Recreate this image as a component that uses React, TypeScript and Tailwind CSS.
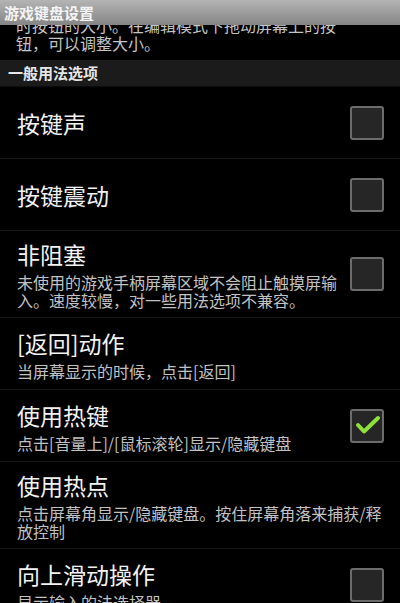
import type { ReactNode } from 'react'

interface Pref {
  title: string
  summary?: string
  checkbox?: boolean
  checked?: boolean
}

const PREFS: Pref[] = [
  { title: '按键声', checkbox: true },
  { title: '按键震动', checkbox: true },
  { title: '非阻塞', summary: '未使用的游戏手柄屏幕区域不会阻止触摸屏输入。速度较慢，对一些用法选项不兼容。', checkbox: true },
  { title: '[返回]动作', summary: '当屏幕显示的时候，点击[返回]' },
  { title: '使用热键', summary: '点击[音量上]/[鼠标滚轮]显示/隐藏键盘', checkbox: true, checked: true },
  { title: '使用热点', summary: '点击屏幕角显示/隐藏键盘。按住屏幕角落来捕获/释放控制' },
  { title: '向上滑动操作', summary: '显示输入的法选择器', checkbox: true },
]

export default function App() {
  return (
    <div
      className="h-[603px] w-[400px] overflow-hidden bg-black text-white"
      style={{ fontFamily: '"Noto Sans CJK SC", "Noto Sans", sans-serif' }}
    >
      {/* 标题栏 */}
      <div className="relative z-10 flex h-[25px] items-center bg-gradient-to-b from-[#b4b4b4] to-[#858585] px-1 text-[15px] font-bold leading-none text-[#f4f4f4]">
        游戏键盘设置
      </div>

      {/* 上一项被滚出去的说明文字 */}
      <div className="h-[35px] overflow-hidden px-4">
        <p className="-mt-[9px] whitespace-nowrap text-[16px] leading-[18px] text-[#c4c4c4]">
          时按钮的大小。在编辑模式下拖动屏幕上的按
          <br />
          钮，可以调整大小。
        </p>
      </div>

      <div className="flex h-[27px] items-center border-b border-[#0c0c0c] bg-[#1b1b1b] px-2 text-[15px] font-bold text-[#e6e6e6]">
        一般用法选项
      </div>

      {PREFS.map((p) => (
        <Row key={p.title} pref={p} />
      ))}
    </div>
  )
}

function Row({ pref }: { pref: Pref }) {
  return (
    <div className="flex min-h-[72px] items-center gap-3 border-b border-[#161616] py-2 pl-[17px] pr-4">
      <div className="min-w-0 flex-1">
        <div className="text-[23px] leading-[30px] text-[#f2f2f2]">{pref.title}</div>
        {pref.summary && (
          <div className="mt-[4px] text-[16px] leading-[18px] text-[#c2c2c2]">{pref.summary}</div>
        )}
      </div>
      {pref.checkbox && <CheckBox checked={pref.checked} />}
    </div>
  )
}

function CheckBox({ checked }: { checked?: boolean }): ReactNode {
  return (
    <div className="flex h-[34px] w-[34px] shrink-0 items-center justify-center rounded-[3px] border-2 border-[#6c6c6c] bg-[#262626]">
      {checked && (
        <svg width="34" height="34" viewBox="0 0 34 34" className="-m-[2px]">
          <path d="M8 16 L14 22.5 L28 9" fill="none" stroke="#8ee03a" strokeWidth="4" strokeLinecap="round" strokeLinejoin="round" />
        </svg>
      )}
    </div>
  )
}
